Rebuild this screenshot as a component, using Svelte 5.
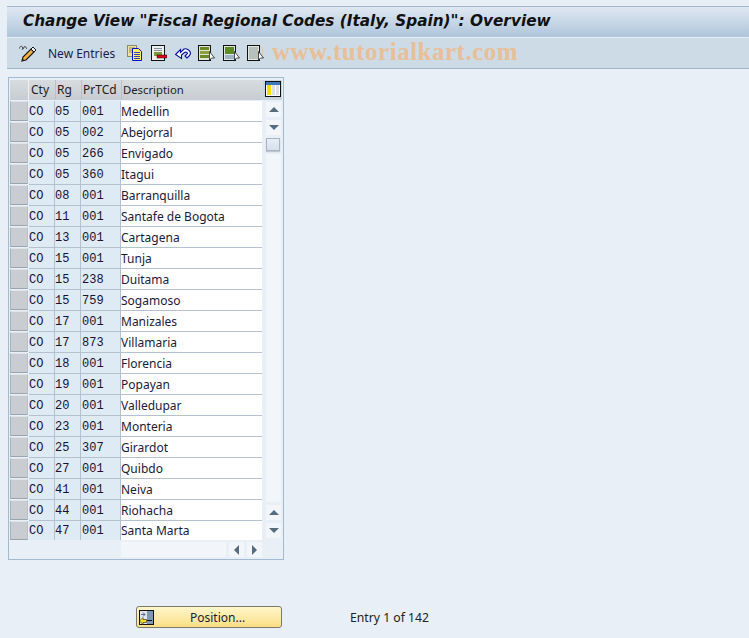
<script lang="ts">
  const rows: string[][] = [
    ['CO', '05', '001', 'Medellin'],
    ['CO', '05', '002', 'Abejorral'],
    ['CO', '05', '266', 'Envigado'],
    ['CO', '05', '360', 'Itagui'],
    ['CO', '08', '001', 'Barranquilla'],
    ['CO', '11', '001', 'Santafe de Bogota'],
    ['CO', '13', '001', 'Cartagena'],
    ['CO', '15', '001', 'Tunja'],
    ['CO', '15', '238', 'Duitama'],
    ['CO', '15', '759', 'Sogamoso'],
    ['CO', '17', '001', 'Manizales'],
    ['CO', '17', '873', 'Villamaria'],
    ['CO', '18', '001', 'Florencia'],
    ['CO', '19', '001', 'Popayan'],
    ['CO', '20', '001', 'Valledupar'],
    ['CO', '23', '001', 'Monteria'],
    ['CO', '25', '307', 'Girardot'],
    ['CO', '27', '001', 'Quibdo'],
    ['CO', '41', '001', 'Neiva'],
    ['CO', '44', '001', 'Riohacha'],
    ['CO', '47', '001', 'Santa Marta']
  ];
</script>

<div class="page">
  <header class="title">Change View "Fiscal Regional Codes (Italy, Spain)": Overview</header>

  <div class="toolbar">
    <svg class="pencil" width="18" height="17" viewBox="0 0 18 17">
      <path d="M0.5 3.5c0-2 2-3 3-1.500s-1 2.500 0 2.500 1-3 2.500-3 1 2 2 2.500" fill="none" stroke="#444" stroke-width="1"/>
      <path d="M3 16l1-4 8-8 3 3-8 8z" fill="#f6b040" stroke="#1a1a1a" stroke-width="1.200"/>
      <path d="M12 4l2-2 3 3-2 2z" fill="#f0f0f0" stroke="#1a1a1a" stroke-width="1"/>
      <path d="M3 16l0.600-2.400 1.800 1.800z" fill="#222"/>
    </svg>
    <span class="new">New Entries</span>
    <svg class="ic first" width="16" height="16" viewBox="0 0 16 16">
      <rect x="0.5" y="0.5" width="9" height="11" fill="#ece29a" stroke="#8a8a68"/>
      <path d="M2 3h6M2 5h3M2 7h3" stroke="#8a8a68"/>
      <path d="M5.500 3.500h6l3 3v9h-9z" fill="#fff25e" stroke="#0010d0"/>
      <path d="M7 7.500h6M7 9.500h6M7 11.500h6M7 13.500h6" stroke="#0010d0" stroke-width="0.800"/>
    </svg>
    <svg class="ic" width="16" height="16" viewBox="0 0 16 16">
      <rect x="0.5" y="0.5" width="13" height="15" fill="#eef0f0" stroke="#111"/>
      <path d="M3 3.500h8M3 5.500h8" stroke="#8a9098"/>
      <rect x="3" y="7" width="8" height="4" fill="#7c9a3c"/>
      <rect x="6" y="10" width="10" height="3" fill="#e00018" stroke="#111" stroke-width="0.500"/>
    </svg>
    <svg class="ic" width="16" height="16" viewBox="0 0 16 16">
      <path d="M0.500 9.500l5-5v3l3.500-3.500c3-1 6 1.500 6.500 4 0 2-2 4-3.500 5l-2-2 2.500-2.500c0-1-1.500-2-3-1l-3 2.500v3.500z" fill="#fff" stroke="#0010a0" stroke-width="1.100"/>
    </svg>
    <svg class="ic arrowed" width="18" height="16" viewBox="0 0 18 16">
      <rect x="0.5" y="0.5" width="12" height="15" fill="#dfe6d8" stroke="#111"/>
      <rect x="2" y="2" width="9" height="3" fill="#6a8a28"/>
      <rect x="2" y="6" width="9" height="3" fill="#8aa040"/>
      <rect x="2" y="10" width="9" height="3" fill="#6a8a28"/>
      <path d="M11.500 6.500v8.500l2-2 3 0z" fill="#fff" stroke="#222" stroke-width="0.800"/>
    </svg>
    <svg class="ic arrowed" width="18" height="16" viewBox="0 0 18 16">
      <rect x="0.5" y="0.5" width="12" height="15" fill="#dfe6e8" stroke="#111"/>
      <rect x="2" y="2" width="9" height="7" fill="#5e8a20"/>
      <path d="M2 11h9M2 13h9" stroke="#5a8098"/>
      <path d="M11.500 6.500v8.500l2-2 3 0z" fill="#fff" stroke="#222" stroke-width="0.800"/>
    </svg>
    <svg class="ic arrowed last" width="18" height="16" viewBox="0 0 18 16">
      <circle cx="9" cy="7" r="7" fill="none" stroke="#e8c4a0"/>
      <rect x="0.5" y="0.5" width="12" height="15" fill="#e6e6e0" stroke="#111"/>
      <path d="M2 3h9M2 5h9M2 7h9M2 9h9M2 11h9M2 13h9" stroke="#8a9a9a"/>
      <path d="M11.500 6.500v8.500l2-2 3 0z" fill="#fff" stroke="#222" stroke-width="0.800"/>
    </svg>
    <span class="mark">www.tutorialkart.com</span>
  </div>

  <section class="panel">
    <div class="head">
      <div class="corner"></div>
      <div class="hc cty">Cty</div>
      <div class="hc rg">Rg</div>
      <div class="hc code">PrTCd</div>
      <div class="hc desc">Description</div>
      <div class="icon-cell">
        <svg width="16" height="16" viewBox="0 0 16 16">
          <rect x="0.5" y="0.5" width="15" height="15" fill="#fff" stroke="#111"/>
          <rect x="1" y="1" width="14" height="3" fill="#3a7ab8"/>
          <rect x="2" y="4" width="4" height="10" fill="#f8dc00"/>
          <rect x="7" y="4" width="3" height="10" fill="#d8dfe6"/>
          <rect x="11" y="4" width="3" height="10" fill="#d8dfe6"/>
        </svg>
      </div>
    </div>

    <div class="body">
      <div class="rows">
        {#each rows as row}
          <div class="row">
            <div class="sel"></div>
            <div class="cell cty mono">{row[0]}</div>
            <div class="cell rg mono">{row[1]}</div>
            <div class="cell code mono">{row[2]}</div>
            <div class="cell desc">{row[3]}</div>
          </div>
        {/each}
      </div>
      <div class="vscroll">
        <div class="btn"><span class="up"></span></div>
        <div class="btn"><span class="down"></span></div>
        <div class="thumb"></div>
        <div class="track"></div>
        <div class="btn"><span class="up"></span></div>
        <div class="btn"><span class="down"></span></div>
      </div>
    </div>

    <div class="hscroll">
      <div class="htrack"></div>
      <div class="btn h"><span class="left"></span></div>
      <div class="btn h"><span class="right"></span></div>
    </div>
  </section>

  <footer class="foot">
    <button class="position">
      <svg width="15" height="15" viewBox="0 0 15 15">
        <rect x="0.5" y="0.5" width="14" height="14" fill="#dfe6ee" stroke="#111"/>
        <rect x="8" y="1" width="6" height="13" fill="#7f96b4"/>
        <path d="M2 4.500h4M4 2.500l2 2-2 2" stroke="#5a6a80" fill="none"/>
        <path d="M8 10.500h5" stroke="#111"/>
        <path d="M0.500 11l3.500-3.500v2h3.500v3H4v2z" fill="#f8dc20" stroke="#222" stroke-width="0.600"/>
      </svg>
      <span>Position...</span>
    </button>
    <span class="entry">Entry 1 of 142</span>
  </footer>
</div>

<style>
  :global(body) {
    margin: 0;
    background: #e8eff7;
  }

  .page {
    height: 638px;
    overflow: hidden;
    padding-top: 6px;
    box-sizing: border-box;
    font-family: "Noto Sans", "Open Sans", sans-serif;
    font-size: 12px;
    color: #111;
  }

  .title {
    margin-left: 7px;
    height: 30px;
    line-height: 28px;
    padding-left: 16px;
    border-top: 1px solid #a3b6c9;
    background: linear-gradient(#dfe8f1, #afc5db);
    font-family: "DejaVu Sans", sans-serif;
    font-weight: bold;
    font-style: italic;
    font-size: 15.3px;
    white-space: nowrap;
  }

  .toolbar {
    margin-left: 7px;
    height: 32px;
    display: flex;
    align-items: center;
    padding-left: 12px;
    box-sizing: border-box;
    background: #cddbe7;
    border-top: 1px solid #e6edf3;
    border-bottom: 1px solid #a3b6c9;
    position: relative;
  }

  .new {
    margin-left: 11px;
    color: #1c1c4a;
  }

  .ic {
    margin-left: 8px;
    flex: none;
  }

  .ic.first {
    margin-left: 12px;
  }

  .ic.arrowed {
    margin-left: 7px;
  }

  .ic.arrowed.last {
    margin-left: 6px;
  }

  .mark {
    position: absolute;
    left: 265px;
    top: 0;
    line-height: 28px;
    font-family: "Liberation Serif", serif;
    font-weight: bold;
    font-size: 25px;
    letter-spacing: 0.5px;
    color: #e8bf96;
    white-space: nowrap;
  }

  .panel {
    margin: 8px 0 0 8px;
    width: 276px;
    height: 483px;
    box-sizing: border-box;
    border: 1px solid #a3b9cf;
    padding: 2px 1px 0 1px;
  }

  .head {
    display: flex;
    height: 20px;
    margin-bottom: 1px;
    background: linear-gradient(#d8dcdf, #c6ccd1);
    width: 272px;
  }

  .corner {
    width: 18px;
    margin-right: 1px;
    border-right: 1px solid #eef2f5;
  }

  .hc {
    line-height: 20px;
    padding-left: 1px;
    box-sizing: border-box;
    border-right: 1px solid #b4c2d0;
    color: #222;
  }

  .cty { width: 26px; }
  .rg { width: 26px; }
  .code { width: 40px; }
  .desc { width: 141px; }

  .hc.desc {
    border-right: none;
    padding-left: 1px;
    font-size: 11.3px;
  }

  .icon-cell {
    width: 19px;
    display: flex;
    align-items: flex-start;
    justify-content: center;
    background: #c9d3dd;
    padding-top: 1px;
  }

  .body {
    display: flex;
  }

  .rows {
    width: 253px;
  }

  .row {
    display: flex;
    height: 21px;
  }

  .row:last-child {
    height: 19px;
  }

  .sel {
    width: 18px;
    height: 20px;
    box-sizing: border-box;
    background: #c9cdd2;
    border: 1px solid #a8b2bc;
    border-top-color: #dfe4e8;
    border-right-color: #b8c0c8;
    border-bottom-color: #9aa4ae;
    margin-right: 1px;
  }

  .row:last-child .sel {
    height: 19px;
  }

  .cell {
    height: 21px;
    line-height: 21px;
    box-sizing: border-box;
    border-right: 1px solid #b4c2d0;
    border-bottom: 1px solid #b4c2d0;
    padding-left: 1px;
    background: #deeaf4;
    color: #222;
  }

  .row:last-child .cell {
    height: 19px;
    border-bottom: none;
    line-height: 19px;
  }

  .mono {
    font-family: "Liberation Mono", monospace;
    font-size: 12px;
    color: #1a1030;
    padding-top: 1px;
  }

  .cell.cty, .cell.rg {
    padding-left: 0;
  }

  .cell.desc {
    background: #fff;
    border-right: none;
    color: #1a1a3a;
    width: 141px;
    padding-left: 0;
  }

  .vscroll {
    width: 16px;
    margin-left: 3px;
    display: flex;
    flex-direction: column;
    gap: 3px;
    padding: 1px 0 2px;
    box-sizing: border-box;
  }

  .btn {
    width: 15px;
    height: 15px;
    background: #f2f6fa;
    display: flex;
    align-items: center;
    justify-content: center;
    flex: none;
  }

  .thumb {
    width: 14px;
    height: 13px;
    box-sizing: border-box;
    border: 1px solid #a8b4bf;
    background: linear-gradient(#e6edf5, #d6e0eb);
    box-shadow: 0 1px 1px #bcc6d0;
  }

  .track {
    flex: 1;
    width: 15px;
    background: #f2f6fa;
  }

  .up, .down, .left, .right {
    width: 0;
    height: 0;
    border-style: solid;
    border-color: transparent;
  }

  .up {
    border-width: 0 5px 5px 5px;
    border-bottom-color: #566b7d;
  }

  .down {
    border-width: 5px 5px 0 5px;
    border-top-color: #566b7d;
  }

  .left {
    border-width: 5px 5px 5px 0;
    border-right-color: #566b7d;
  }

  .right {
    border-width: 5px 0 5px 5px;
    border-left-color: #566b7d;
  }

  .hscroll {
    display: flex;
    gap: 3px;
    margin: 2px 0 0 111px;
    height: 15px;
  }

  .htrack {
    width: 105px;
    background: #f2f6fa;
  }

  .btn.h {
    width: 15px;
  }

  .foot {
    display: flex;
    align-items: center;
    margin: 46px 0 0 136px;
  }

  .position {
    width: 146px;
    height: 22px;
    padding: 0 0 0 2px;
    box-sizing: border-box;
    display: flex;
    align-items: center;
    border: 1px solid #7a7a6a;
    border-radius: 3px;
    background: linear-gradient(#fff6cc, #fbdf84);
    font-family: inherit;
    font-size: 12px;
    color: #1a1a3a;
  }

  .position span {
    margin-left: 36px;
  }

  .entry {
    margin-left: 68px;
    color: #222;
    font-size: 12.2px;
  }
</style>
